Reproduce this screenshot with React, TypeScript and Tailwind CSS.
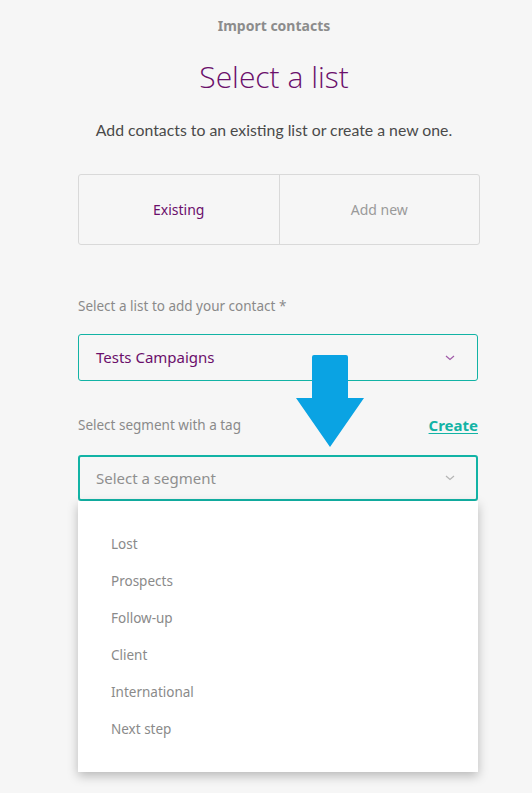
import React from "react";

const Chevron = ({ color }: { color: string }) => (
  <svg width="10" height="6" viewBox="0 0 10 6" fill="none">
    <path d="M1 1 L5 4.5 L9 1" stroke={color} strokeWidth="1.2" />
  </svg>
);

export default function App() {
  const items = ["Lost", "Prospects", "Follow-up", "Client", "International", "Next step"];
  return (
    <div className="relative min-h-[793px] w-[532px] bg-[#f6f6f6] overflow-hidden" style={{ fontFamily: '"Noto Sans", sans-serif' }}>
      <div className="ml-[78px] w-[402px] flex flex-col">
        <div className="pr-[10px] pt-[15px] h-[38px] text-center text-[14px] font-bold leading-[22px] text-[#8c8c8c]">Import contacts</div>
        <div className="pr-[10px] mt-[19px] text-center text-[30px] leading-[40px] text-[#6b0f6b]" style={{ fontFamily: '"Open Sans", sans-serif', fontWeight: 300 }}>Select a list</div>
        <div className="pr-[10px] mt-[22px] text-center text-[15.8px] leading-[22px] text-[#4a4a4a]" style={{ fontFamily: 'Lato, sans-serif' }}>Add contacts to an existing list or create a new one.</div>
        <div className="mt-[33px] h-[71px] w-[402px] flex rounded-[3px] border border-[#d9d9d9]">
          <div className="flex-1 flex items-center justify-center border-r border-[#d9d9d9] text-[14px] text-[#6b0f6b]">Existing</div>
          <div className="flex-1 flex items-center justify-center text-[14px] text-[#9a9a9a]">Add new</div>
        </div>
        <div className="mt-[51px] text-[13.5px] leading-[20px] text-[#8a8a8a]">Select a list to add your contact *</div>
        <div className="mt-[18px] w-[400px] h-[47px] rounded-[3px] border border-[#12b3a5] flex items-center justify-between pl-[17px] pr-[22px]">
          <span className="text-[15px] text-[#6b0f6b]">Tests Campaigns</span>
          <Chevron color="#a05aa8" />
        </div>
        <div className="mt-[34px] w-[400px] flex items-center justify-between h-[20px]">
          <span className="text-[13.5px] text-[#8a8a8a]">Select segment with a tag</span>
          <span className="text-[15px] font-bold text-[#12b3a5] underline underline-offset-2">Create</span>
        </div>
        <div className="mt-[20px] w-[400px] h-[46px] rounded-[3px] border-2 border-[#12b3a5] flex items-center justify-between pl-[16px] pr-[21px]">
          <span className="text-[15px] text-[#8f8f8f]">Select a segment</span>
          <Chevron color="#b5b5b5" />
        </div>
        <div className="w-[400px] h-[271px] bg-white shadow-[0_4px_10px_rgba(0,0,0,0.25)] pt-[33px] pl-[33px]">
          {items.map((it) => (
            <div key={it} className="h-[37px] text-[13.5px] leading-[20px] text-[#8a8a8a]">{it}</div>
          ))}
        </div>
      </div>
      <svg className="absolute left-[295px] top-[354px]" width="70" height="94" viewBox="0 0 70 94">
        <path d="M19 1 H51 Q53 1 53 3 V44 H69 L35 93 L1 44 H17 V3 Q17 1 19 1 Z" fill="#0aa3e3" />
      </svg>
    </div>
  );
}
